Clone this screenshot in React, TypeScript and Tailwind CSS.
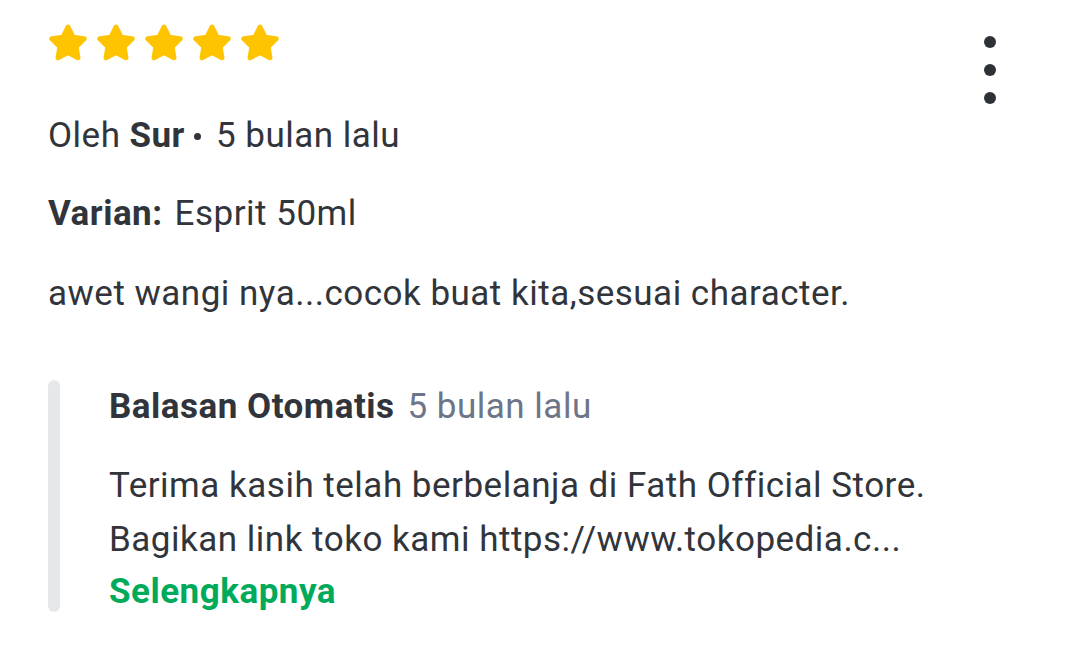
import React from "react";

function Star() {
  return (
    <svg width="38" height="37" viewBox="0 0 38 37">
      <polygon
        points="19,3 24,13.1 35.2,14.8 27.1,22.6 29,33.8 19,28.5 9,33.8 10.9,22.6 2.8,14.8 14,13.1"
        fill="#FFC400"
        stroke="#FFC400"
        strokeWidth="5"
        strokeLinejoin="round"
      />
    </svg>
  );
}

export default function App() {
  return (
    <div className="w-[1080px] h-[659px] bg-white font-['Roboto',sans-serif] text-[#31353b] text-[35px] tracking-[0.5px] leading-[40px]">
      <div className="flex justify-between items-start pl-[49px] pr-[84px]">
        <div className="flex gap-[10px] mt-[24px]">
          <Star />
          <Star />
          <Star />
          <Star />
          <Star />
        </div>
        <div className="flex flex-col gap-[16px] mt-[36px]">
          <div className="w-[12px] h-[12px] rounded-full bg-[#2e3137]" />
          <div className="w-[12px] h-[12px] rounded-full bg-[#2e3137]" />
          <div className="w-[12px] h-[12px] rounded-full bg-[#2e3137]" />
        </div>
      </div>

      <div className="pl-[48px] pr-[84px]">
        <div className="mt-[12px] flex items-center">
          <span>Oleh</span>
          <span className="font-bold ml-[9px]">Sur</span>
          <span className="ml-[9px] w-[7px] h-[7px] rounded-full bg-[#31353b]" />
          <span className="ml-[15px]">5 bulan lalu</span>
        </div>
        <div className="mt-[38px] flex">
          <span className="font-bold">Varian:</span>
          <span className="ml-[12px]">Esprit 50ml</span>
        </div>
        <div className="mt-[40px]">awet wangi nya...cocok buat kita,sesuai character.</div>

        <div className="mt-[66px] flex">
          <div className="w-[12px] h-[232px] rounded-full bg-[#e5e7e9] shrink-0" />
          <div className="pl-[49px] pt-[7px]">
            <div className="flex">
              <span className="font-bold">Balasan Otomatis</span>
              <span className="ml-[13px] text-[#6d7588]">5 bulan lalu</span>
            </div>
            <div className="mt-[32px] leading-[54px]">
              <div>Terima kasih telah berbelanja di Fath Official Store.</div>
              <div>Bagikan link toko kami https://www.tokopedia.c...</div>
            </div>
            <div className="font-bold text-[#00aa5b] leading-[50px]">Selengkapnya</div>
          </div>
        </div>
      </div>
    </div>
  );
}
